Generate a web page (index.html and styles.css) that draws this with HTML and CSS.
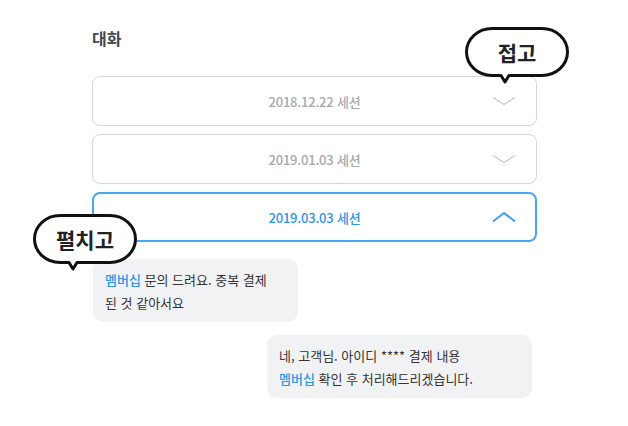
FILE: index.html
```html
<!DOCTYPE html>
<html lang="ko">
<head>
<meta charset="utf-8">
<link rel="stylesheet" href="styles.css">
</head>
<body>
<div class="page">
  <h2 class="title">대화</h2>
  <div class="sessions">
    <div class="session">
      <span class="session-label">2018.12.22 세션</span>
      <svg class="chev" width="24" height="10" viewBox="0 0 24 10"><path d="M1 1.5 L12 8.5 L23 1.5" fill="none" stroke="#b3b6bb" stroke-width="1"/></svg>
    </div>
    <div class="session">
      <span class="session-label">2019.01.03 세션</span>
      <svg class="chev" width="24" height="10" viewBox="0 0 24 10"><path d="M1 1.5 L12 8.5 L23 1.5" fill="none" stroke="#b3b6bb" stroke-width="1"/></svg>
    </div>
    <div class="session active">
      <span class="session-label">2019.03.03 세션</span>
      <svg class="chev" width="24" height="12" viewBox="0 0 24 12"><path d="M1 10.5 L12 2 L23 10.5" fill="none" stroke="#3fa2ee" stroke-width="2"/></svg>
    </div>
  </div>
  <div class="chat">
    <div class="msg msg-in"><span class="hl">멤버십</span> 문의 드려요. 중복 결제<br>된 것 같아서요</div>
    <div class="msg msg-out">네, 고객님. 아이디 **** 결제 내용<br><span class="hl">멤버십</span> 확인 후 처리해드리겠습니다.</div>
  </div>
</div>

<div class="callout callout-fold">
  <svg class="callout-shape" width="104" height="58" viewBox="0 0 104 58"><path d="M27 1.5 H77 A25.5 23.5 0 0 1 77 48.5 H44 L40 55 L36 48.5 H27 A25.5 23.5 0 0 1 27 1.5 Z" fill="#fff" stroke="#111" stroke-width="3" stroke-linejoin="round"/></svg>
  <span class="callout-text">접고</span>
</div>
<div class="callout callout-open">
  <svg class="callout-shape" width="104" height="58" viewBox="0 0 104 58"><path d="M27 1.5 H77 A25.5 23.5 0 0 1 77 48.5 H44 L40 55 L36 48.5 H27 A25.5 23.5 0 0 1 27 1.5 Z" fill="#fff" stroke="#111" stroke-width="3" stroke-linejoin="round"/></svg>
  <span class="callout-text">펼치고</span>
</div>
</body>
</html>
```

FILE: styles.css
```css
* { box-sizing: border-box; }
html, body { margin: 0; padding: 0; background: #fff; }
body {
  width: 628px;
  height: 426px;
  position: relative;
  overflow: hidden;
  font-family: "Noto Sans CJK KR", "Noto Sans", sans-serif;
}
.page {
  padding: 26px 0 0 92px;
  width: 537px;
}
.title {
  margin: 0 0 26px;
  font-size: 16px;
  line-height: 24px;
  font-weight: 700;
  color: #45474a;
}
.sessions {
  display: flex;
  flex-direction: column;
  gap: 8px;
}
.session {
  position: relative;
  height: 50px;
  border: 1px solid #d3d6da;
  border-radius: 8px;
  display: flex;
  align-items: center;
  justify-content: center;
}
.session-label {
  font-size: 13px;
  font-weight: 500;
  color: #a6a9ae;
  letter-spacing: -0.2px;
}
.chev {
  position: absolute;
  right: 20px;
  top: 50%;
  transform: translateY(-50%);
}
.session.active {
  border: 2px solid #46a6f0;
}
.session.active .session-label {
  color: #2c95e8;
  font-weight: 500;
}
.session.active .chev { right: 19px; }
.chat {
  margin-top: 17px;
  display: flex;
  flex-direction: column;
  gap: 13px;
}
.msg {
  background: #f1f2f4;
  border-radius: 10px;
  font-size: 13px;
  line-height: 23px;
  color: #333;
  padding: 9px 12px 8px;
  white-space: nowrap;
}
.msg-in {
  width: 205px;
  margin-left: 1px;
}
.msg-out {
  width: 265px;
  margin-left: 175px;
}
.hl {
  color: #2c95e8;
  font-weight: 500;
}
.callout {
  position: absolute;
  width: 104px;
  height: 58px;
}
.callout-shape {
  position: absolute;
  left: 0;
  top: 0;
}
.callout-text {
  position: absolute;
  left: 0;
  top: 1px;
  width: 104px;
  height: 48px;
  display: flex;
  align-items: center;
  justify-content: center;
  font-size: 21px;
  font-weight: 700;
  color: #222;
}
.callout-fold { left: 465px; top: 27px; }
.callout-open { left: 33px; top: 214px; }
```
